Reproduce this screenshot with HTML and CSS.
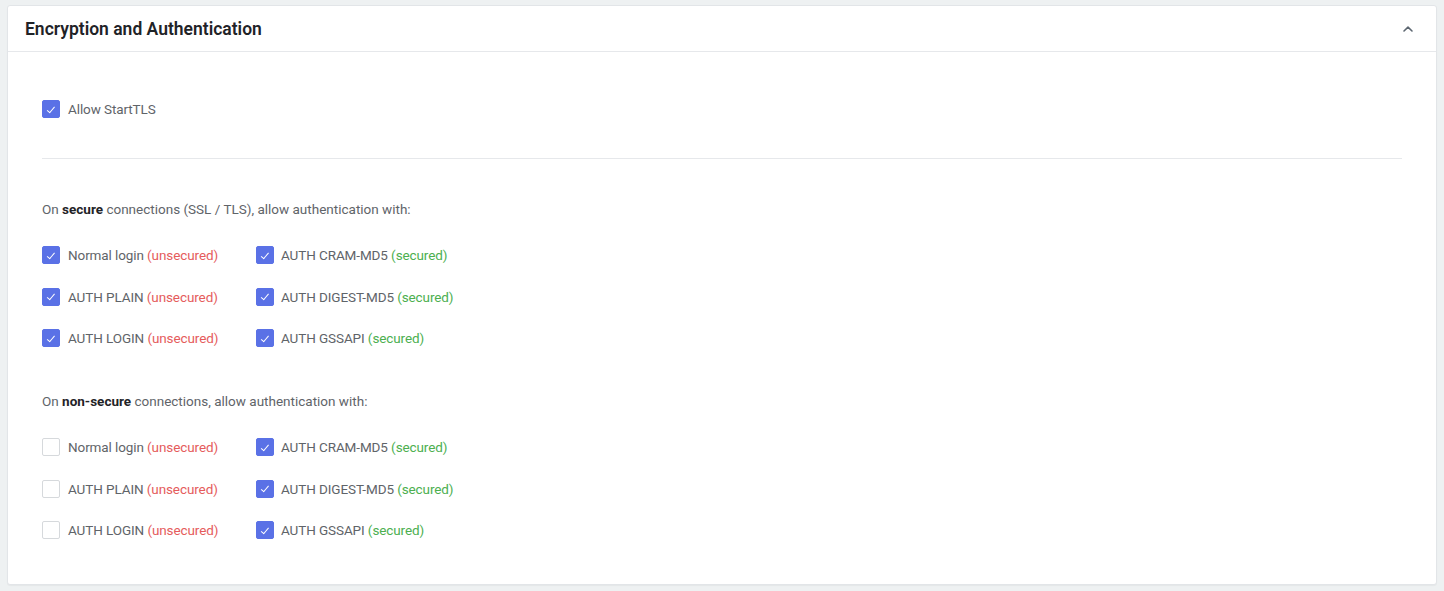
FILE: index.html
```html
<!DOCTYPE html>
<html>
<head>
<meta charset="utf-8">
<link rel="stylesheet" href="styles.css">
</head>
<body>
<div class="card">
  <div class="card-header">
    <h2 class="title">Encryption and Authentication</h2>
    <svg class="chevron" width="12" height="8" viewBox="0 0 12 8"><path d="M2 6 L6 2.2 L10 6" fill="none" stroke="#5c6670" stroke-width="1.6" stroke-linecap="round" stroke-linejoin="round"/></svg>
  </div>
  <div class="card-body">
    <label class="check single"><span class="box on"></span><span class="lbl">Allow StartTLS</span></label>
    <hr class="divider">
    <p class="heading">On <b>secure</b> connections (SSL / TLS), allow authentication with:</p>
    <div class="grid">
      <label class="check"><span class="box on"></span><span class="lbl">Normal login <span class="bad">(unsecured)</span></span></label>
      <label class="check"><span class="box on"></span><span class="lbl">AUTH CRAM-MD5 <span class="good">(secured)</span></span></label>
      <label class="check"><span class="box on"></span><span class="lbl">AUTH PLAIN <span class="bad">(unsecured)</span></span></label>
      <label class="check"><span class="box on"></span><span class="lbl">AUTH DIGEST-MD5 <span class="good">(secured)</span></span></label>
      <label class="check"><span class="box on"></span><span class="lbl">AUTH LOGIN <span class="bad">(unsecured)</span></span></label>
      <label class="check"><span class="box on"></span><span class="lbl">AUTH GSSAPI <span class="good">(secured)</span></span></label>
    </div>
    <p class="heading second">On <b>non-secure</b> connections, allow authentication with:</p>
    <div class="grid">
      <label class="check"><span class="box"></span><span class="lbl">Normal login <span class="bad">(unsecured)</span></span></label>
      <label class="check"><span class="box on"></span><span class="lbl">AUTH CRAM-MD5 <span class="good">(secured)</span></span></label>
      <label class="check"><span class="box"></span><span class="lbl">AUTH PLAIN <span class="bad">(unsecured)</span></span></label>
      <label class="check"><span class="box on"></span><span class="lbl">AUTH DIGEST-MD5 <span class="good">(secured)</span></span></label>
      <label class="check"><span class="box"></span><span class="lbl">AUTH LOGIN <span class="bad">(unsecured)</span></span></label>
      <label class="check"><span class="box on"></span><span class="lbl">AUTH GSSAPI <span class="good">(secured)</span></span></label>
    </div>
  </div>
</div>
</body>
</html>
```

FILE: styles.css
```css
html, body { margin: 0; padding: 0; }
body {
  background: #eef1f2;
  font-family: "Roboto", "Lato", sans-serif;
  font-size: 13.5px;
  color: #5f6469;
  padding: 5px 7px 0 7px;
  height: 591px;
  box-sizing: border-box;
  overflow: hidden;
}
.card {
  background: #fff;
  border: 1px solid #e2e5e8;
  border-radius: 3px;
  height: 580px;
  box-sizing: border-box;
  box-shadow: 0 1px 1px rgba(0,0,0,0.04);
}
.card-header {
  height: 46px;
  box-sizing: border-box;
  border-bottom: 1px solid #e6e8eb;
  display: flex;
  align-items: center;
  justify-content: space-between;
  padding: 0 22px 0 17px;
}
.title {
  margin: 0;
  font-size: 17.5px;
  font-weight: 600;
  color: #1f2327;
  padding-top: 1px;
}
.chevron { display: block; }
.card-body {
  padding: 0 34px 0 34px;
}
.check {
  display: flex;
  align-items: center;
  height: 18px;
}
.single { margin-top: 48px; }
.box {
  width: 18px;
  height: 18px;
  box-sizing: border-box;
  border: 1px solid #d6d9dc;
  border-radius: 2px;
  background: #fff;
  margin-right: 8px;
  flex: none;
  position: relative;
}
.box.on {
  background: #5a71e6;
  border-color: #5a71e6;
}
.box.on::after {
  content: "";
  position: absolute;
  left: 5.5px;
  top: 3.5px;
  width: 3px;
  height: 6.5px;
  border: solid #fff;
  border-width: 0 1.2px 1.2px 0;
  transform: rotate(40deg);
}
.lbl { white-space: nowrap; letter-spacing: -0.1px; }
.bad { color: #e55c5c; }
.good { color: #4caf50; }
.divider {
  border: 0;
  border-top: 1px solid #e6e8eb;
  margin: 40px 0 0 0;
}
.heading {
  margin: 41px 0 0 0;
  line-height: 18px;
}
.heading b { color: #1f2327; font-weight: 700; }
.second { margin-top: 45px; }
.grid {
  display: grid;
  grid-template-columns: 214px auto;
  justify-content: start;
  row-gap: 23.5px;
  margin-top: 28px;
}
.grid .check:nth-child(even) .box { margin-right: 7px; }
```
